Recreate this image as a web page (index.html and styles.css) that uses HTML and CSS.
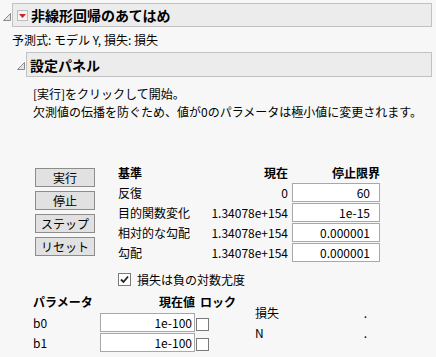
FILE: index.html
```html
<!DOCTYPE html>
<html>
  <head>
    <title>非線形回帰のあてはめ</title>
    <link rel="stylesheet" href="styles.css">
  </head>
  <body>
    <div class="report">
      <div class="outline-head">
        <svg class="disclosure" width="10" height="10" viewBox="0 0 10 10">
          <polygon points="1.5,8.5 8.5,1.5 8.5,8.5" fill="#e4e4e4" stroke="#8a8a8a" stroke-width="1"/>
        </svg>
        <div class="title-box">
          <span class="menu-btn">
            <svg width="9" height="9" viewBox="0 0 9 9">
              <polygon points="1,3 8,3 4.5,7" fill="#d81e1e"/>
            </svg>
          </span>
          <h1>非線形回帰のあてはめ</h1>
        </div>
      </div>
      <div class="formula">予測式: モデル Y, 損失: 損失</div>

      <div class="outline-head sub">
        <svg class="disclosure" width="10" height="10" viewBox="0 0 10 10">
          <polygon points="1.5,8.5 8.5,1.5 8.5,8.5" fill="#e4e4e4" stroke="#8a8a8a" stroke-width="1"/>
        </svg>
        <div class="title-box">
          <h2>設定パネル</h2>
        </div>
      </div>

      <div class="panel">
        <p class="note">[実行]をクリックして開始。</p>
        <p class="note">欠測値の伝播を防ぐため、値が0のパラメータは極小値に変更されます。</p>

        <div class="controls">
          <div class="buttons">
            <button>実行</button>
            <button>停止</button>
            <button>ステップ</button>
            <button>リセット</button>
          </div>
          <div class="criteria">
            <div class="th">基準</div>
            <div class="th num">現在</div>
            <div class="th num">停止限界</div>

            <div>反復</div>
            <div class="num">0</div>
            <div class="field">60</div>

            <div>目的関数変化</div>
            <div class="num">1.34078e+154</div>
            <div class="field">1e-15</div>

            <div>相対的な勾配</div>
            <div class="num">1.34078e+154</div>
            <div class="field">0.000001</div>

            <div>勾配</div>
            <div class="num">1.34078e+154</div>
            <div class="field">0.000001</div>
          </div>
        </div>

        <label class="check-row">
          <span class="box checked">
            <svg width="11" height="11" viewBox="0 0 11 11">
              <polyline points="2,5.5 4.5,8 9,2.5" fill="none" stroke="#222" stroke-width="1.8"/>
            </svg>
          </span>
          損失は負の対数尤度
        </label>

        <div class="params-area">
          <div class="params">
            <div class="th">パラメータ</div>
            <div class="th num">現在値</div>
            <div class="th lock-h">ロック</div>

            <div>b0</div>
            <div class="field">1e-100</div>
            <div><span class="box"></span></div>

            <div>b1</div>
            <div class="field">1e-100</div>
            <div><span class="box"></span></div>
          </div>
          <div class="summary">
            <div>損失</div><div class="dot">.</div>
            <div>N</div><div class="dot">.</div>
          </div>
        </div>
      </div>
    </div>
  </body>
</html>
```

FILE: styles.css
```css
body {
  margin: 0;
  background-color: #f7f7f7;
  color: #000;
  font-family: "Noto Sans CJK JP", "Noto Sans", sans-serif;
  font-size: 12px;
}
.report {
  padding: 3px 4px 0 2px;
}
.outline-head {
  display: flex;
  align-items: center;
}
.disclosure {
  flex: none;
  margin-top: 3px;
}
.title-box {
  flex: 1;
  height: 22px;
  display: flex;
  align-items: center;
  background-color: #ececec;
  border: 1px solid #c2c2c2;
}
.title-box h1,
.title-box h2 {
  margin: 0;
  font-size: 14px;
  font-weight: bold;
  line-height: 22px;
}
.menu-btn {
  width: 9px;
  height: 9px;
  margin: 0 3px 0 4px;
  border: 1px solid #bdbdbd;
  background-color: #f4f4f4;
  display: grid;
  place-items: center;
}
.formula {
  margin: 4px 0 0 10px;
  line-height: 18px;
}
.sub {
  margin: 3px 0 0 14px;
}
.sub .title-box {
  height: 23px;
}
.sub h2 {
  padding-left: 3px;
}
.panel {
  padding-left: 31px;
}
.note {
  margin: 0;
  line-height: 18px;
}
.note:first-child {
  margin-top: 8px;
}
.controls {
  display: flex;
  margin-top: 41px;
}
.buttons {
  display: flex;
  flex-direction: column;
  gap: 4px;
  margin: 6px 0 0 2px;
}
.buttons button {
  width: 60px;
  height: 19px;
  padding: 0;
  font-family: inherit;
  font-size: 12px;
  line-height: 16px;
  background-color: #e1e1e1;
  border: 1px solid #8c8c8c;
  border-radius: 0;
  color: #000;
}
.criteria {
  display: grid;
  grid-template-columns: 78px 88px 88px;
  grid-auto-rows: 20px;
  column-gap: 4px;
  align-items: center;
  margin-left: 23px;
}
.th {
  font-weight: bold;
}
.num {
  text-align: right;
}
.field {
  height: 19px;
  box-sizing: border-box;
  background-color: #fff;
  border: 1px solid #a8a8a8;
  text-align: right;
  padding-right: 9px;
  line-height: 17px;
}
.check-row {
  display: flex;
  align-items: center;
  gap: 6px;
  margin: 9px 0 0 85px;
  height: 16px;
}
.box {
  display: inline-grid;
  place-items: center;
  width: 11px;
  height: 11px;
  background-color: #fff;
  border: 1px solid #7a7a7a;
  vertical-align: middle;
}
.params-area {
  display: flex;
  align-items: flex-start;
  margin-top: 3px;
}
.params {
  display: grid;
  grid-template-columns: 66px 95px 16px;
  grid-template-rows: 22px 20px 20px;
  column-gap: 1px;
  align-items: center;
}
.params .field {
  padding-right: 2px;
}
.lock-h {
  white-space: nowrap;
  margin-left: 4px;
}
.summary {
  display: grid;
  grid-template-columns: 100px 20px;
  grid-auto-rows: 20px;
  align-items: center;
  margin: 12px 0 0 43px;
}
.dot {
  text-align: right;
  padding-right: 8px;
}
```
